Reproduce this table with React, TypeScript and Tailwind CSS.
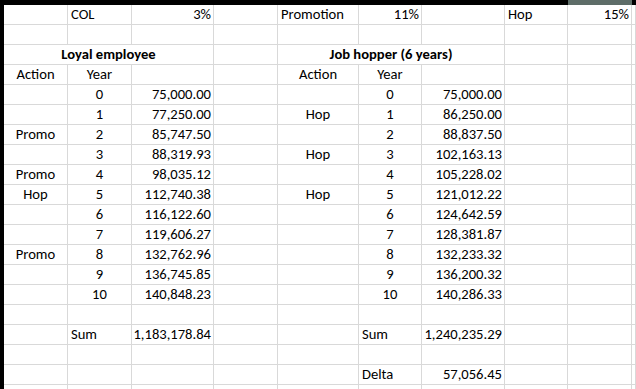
import React from "react";

type Cell = { t?: string; a?: "l" | "c" | "r"; b?: boolean; span?: number };

const L = (t: string): Cell => ({ t, a: "l" });
const C = (t: string): Cell => ({ t, a: "c" });
const R = (t: string): Cell => ({ t, a: "r" });
const E: Cell = {};

const loyal = [
  ["", "0", "75,000.00"],
  ["", "1", "77,250.00"],
  ["Promo", "2", "85,747.50"],
  ["", "3", "88,319.93"],
  ["Promo", "4", "98,035.12"],
  ["Hop", "5", "112,740.38"],
  ["", "6", "116,122.60"],
  ["", "7", "119,606.27"],
  ["Promo", "8", "132,762.96"],
  ["", "9", "136,745.85"],
  ["", "10", "140,848.23"],
];
const hopper = [
  ["", "0", "75,000.00"],
  ["Hop", "1", "86,250.00"],
  ["", "2", "88,837.50"],
  ["Hop", "3", "102,163.13"],
  ["", "4", "105,228.02"],
  ["Hop", "5", "121,012.22"],
  ["", "6", "124,642.59"],
  ["", "7", "128,381.87"],
  ["", "8", "132,233.32"],
  ["", "9", "136,200.32"],
  ["", "10", "140,286.33"],
];

const rows: Cell[][] = [
  [E, L("COL"), R("3%"), E, L("Promotion"), R("11%"), E, L("Hop"), R("15%"), E],
  [E, E, E, E, E, E, E, E, E, E],
  [{ t: "Loyal employee", a: "c", b: true, span: 3 }, E, { t: "Job hopper (6 years)", a: "c", b: true, span: 3 }, E, E, E],
  [C("Action"), C("Year"), E, E, C("Action"), C("Year"), E, E, E, E],
  ...loyal.map((l, i) => {
    const h = hopper[i];
    return [C(l[0]), C(l[1]), R(l[2]), E, C(h[0]), C(h[1]), R(h[2]), E, E, E];
  }),
  [E, E, E, E, E, E, E, E, E, E],
  [E, L("Sum"), R("1,183,178.84"), E, E, L("Sum"), R("1,240,235.29"), E, E, E],
  [E, E, E, E, E, E, E, E, E, E],
  [E, E, E, E, E, L("Delta"), R("57,056.45"), E, E, E],
  [E, E, E, E, E, E, E, E, E, E],
];

export default function App() {
  return (
    <div
      className="w-[636px] h-[389px] overflow-hidden bg-white flex flex-col text-[14.6px] text-black"
      style={{ fontFamily: "Carlito, Calibri, Lato, 'Open Sans', sans-serif" }}
    >
      <div className="h-[5px] shrink-0 grid grid-cols-[4px_64px_64px_82px_64px_81px_63px_83px_63px_64px_1fr]">
        <div className="bg-black" />
        <div className="bg-black col-span-8" />
        <div className="bg-[#5e6d68]" />
        <div className="bg-black" />
      </div>
      <div className="flex flex-1 min-h-0">
        <div className="w-[4px] shrink-0 bg-black" />
        <div className="flex-1 grid grid-cols-[64px_64px_82px_64px_81px_63px_83px_63px_64px_1fr] auto-rows-[20px] content-start">
          {rows.map((r, ri) =>
            r.map((c, ci) => (
              <div
                key={`${ri}-${ci}`}
                className={`border-r border-b border-[#d9d9d9] flex items-end pb-[1px] leading-[18px] whitespace-nowrap overflow-visible ${
                  c.span === 3 ? "col-span-3" : ""
                } ${c.a === "r" ? "justify-end pr-[2px]" : c.a === "c" ? "justify-center" : "justify-start pl-[3px]"} ${
                  c.b ? "font-bold" : ""
                }`}
              >
                {c.t}
              </div>
            ))
          )}
        </div>
      </div>
    </div>
  );
}
